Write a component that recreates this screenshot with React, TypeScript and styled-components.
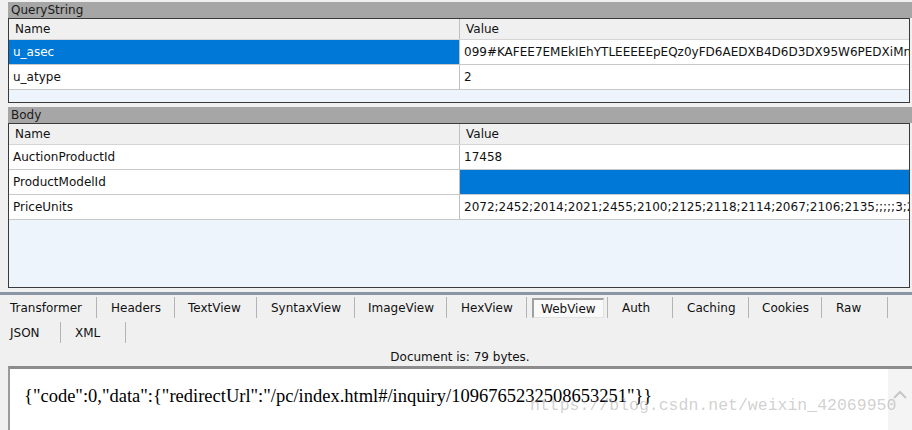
import React from "react";
import styled, { createGlobalStyle } from "styled-components";

const Global = createGlobalStyle`
  html, body { margin: 0; padding: 0; background: #f0f0f0; }
  body { font-family: "DejaVu Sans", Verdana, sans-serif; font-size: 12px; color: #000; }
`;

const Page = styled.div`
  width: 912px;
  height: 430px;
  overflow: hidden;
  padding: 2px 0 0 8px;
  box-sizing: border-box;
  display: flex;
  flex-direction: column;
  background: #f0f0f0;
`;

const Section = styled.section<{ $gap?: number }>`
  display: flex;
  flex-direction: column;
  margin-top: ${(p) => p.$gap ?? 0}px;
`;

const SectionTitle = styled.div`
  height: 16px;
  line-height: 16px;
  background: #a6a6a6;
  padding-left: 3px;
  color: #1a1a1a;
  font-size: 12px;
`;

const Grid = styled.div<{ $height: number }>`
  height: ${(p) => p.$height}px;
  margin-right: 2px;
  border: 1px solid #3a3a3a;
  background: #edf4fc;
  box-sizing: border-box;
  display: flex;
  flex-direction: column;
  overflow: hidden;
`;

const Row = styled.div<{ $head?: boolean }>`
  display: grid;
  grid-template-columns: 451px 1fr;
  height: ${(p) => (p.$head ? 21 : 25)}px;
  background: ${(p) => (p.$head ? "#f0f0f0" : "#ffffff")};
  border-bottom: 1px solid ${(p) => (p.$head ? "#d5d5d5" : "#c8c8c8")};
  box-sizing: border-box;
`;

const Cell = styled.div<{ $selected?: boolean; $head?: boolean; $first?: boolean }>`
  display: flex;
  align-items: center;
  padding-left: ${(p) => (p.$head ? 6 : 4)}px;
  white-space: nowrap;
  overflow: hidden;
  background: ${(p) => (p.$selected ? "#0078d7" : "transparent")};
  color: ${(p) => (p.$selected ? "#ffffff" : "#111")};
  border-right: ${(p) => (p.$first ? "1px solid #c0c0c0" : "none")};
  font-size: 12px;
`;

const Splitter = styled.div`
  height: 3px;
  margin-top: 4px;
  background: #8a96a3;
  margin-left: -8px;
`;

const TabRow = styled.div`
  display: flex;
  height: 25px;
  align-items: center;
`;

const Tab = styled.div<{ $w: number; $pl: number; $sep?: boolean }>`
  width: ${(p) => p.$w}px;
  height: 21px;
  box-sizing: border-box;
  display: flex;
  align-items: center;
  padding-left: ${(p) => p.$pl}px;
  border-right: ${(p) => (p.$sep ? "1px solid #b4b4b4" : "none")};
  font-size: 12px;
  color: #111;
  white-space: nowrap;
`;

const ActiveBox = styled.div`
  height: 20px;
  margin-left: -9px;
  padding: 2px 7px 0 7px;
  box-sizing: border-box;
  display: flex;
  align-items: center;
  background: #f9f9f9;
  border-top: 2px solid #a0a0a0;
  border-left: 2px solid #a0a0a0;
  border-right: 1px solid #e3e3e3;
  border-bottom: 1px solid #e3e3e3;
`;

const Status = styled.div`
  height: 21px;
  display: flex;
  align-items: center;
  justify-content: center;
  font-size: 12px;
  color: #111;
  padding-top: 3px;
  box-sizing: border-box;
`;

const Viewer = styled.div`
  flex: 1;
  border-top: 3px solid #8c8c8c;
  border-left: 2px solid #9a9a9a;
  background: #ffffff;
  display: flex;
  position: relative;
`;

const Content = styled.div`
  flex: 1;
  padding: 17px 0 0 14px;
  font-family: "Liberation Serif", "Times New Roman", serif;
  font-size: 18.5px;
  color: #000;
  white-space: nowrap;
`;

const ScrollTrack = styled.div`
  width: 24px;
  background: #f4f4f4;
  display: flex;
  justify-content: center;
  padding-top: 21px;
  box-sizing: border-box;
`;

const Watermark = styled.div`
  position: absolute;
  left: 520px;
  top: 27px;
  font-family: "Liberation Mono", "DejaVu Sans Mono", monospace;
  font-size: 16.5px;
  color: rgba(150, 150, 150, 0.45);
  pointer-events: none;
  white-space: nowrap;
`;

const tabs1 = [
  { label: "Transformer", w: 89, pl: 2 },
  { label: "Headers", w: 78, pl: 14 },
  { label: "TextView", w: 82, pl: 13 },
  { label: "SyntaxView", w: 98, pl: 14 },
  { label: "ImageView", w: 92, pl: 13 },
  { label: "HexView", w: 80, pl: 14 },
  { label: "WebView", w: 81, pl: 14, active: true },
  { label: "Auth", w: 65, pl: 14 },
  { label: "Caching", w: 76, pl: 14 },
  { label: "Cookies", w: 73, pl: 13 },
  { label: "Raw", w: 66, pl: 14 },
];

const tabs2 = [
  { label: "JSON", w: 53, pl: 2 },
  { label: "XML", w: 65, pl: 14 },
];

const query = [
  { name: "u_asec", value: "099#KAFEE7EMEkIEhYTLEEEEEpEQz0yFD6AEDXB4D6D3DX95W6PEDXiMn6EDXiMn6", selName: true },
  { name: "u_atype", value: "2" },
];

const body = [
  { name: "AuctionProductId", value: "17458" },
  { name: "ProductModelId", value: "", selValue: true },
  {
    name: "PriceUnits",
    value: "2072;2452;2014;2021;2455;2100;2125;2118;2114;2067;2106;2135;;;;;3;2;4;5;6;7;8",
  },
];

type Item = { name: string; value: string; selName?: boolean; selValue?: boolean };

const ParamTable: React.FC<{ title: string; rows: Item[]; height: number; gap?: number }> = ({
  title,
  rows,
  height,
  gap,
}) => (
  <Section $gap={gap}>
    <SectionTitle>{title}</SectionTitle>
    <Grid $height={height}>
      <Row $head>
        <Cell $head $first>Name</Cell>
        <Cell $head>Value</Cell>
      </Row>
      {rows.map((r) => (
        <Row key={r.name}>
          <Cell $first $selected={r.selName}>{r.name}</Cell>
          <Cell $selected={r.selValue}>{r.value}</Cell>
        </Row>
      ))}
    </Grid>
  </Section>
);

const Chevron = () => (
  <svg width="14" height="9" viewBox="0 0 14 9">
    <path d="M1 8 L7 2 L13 8" fill="none" stroke="#c6c6c6" strokeWidth="2" />
  </svg>
);

export default function App() {
  return (
    <>
      <Global />
      <Page>
        <ParamTable title="QueryString" rows={query} height={85} />
        <ParamTable title="Body" rows={body} height={165} gap={4} />
        <Splitter />
        <TabRow>
          {tabs1.map((t) => (
            <Tab key={t.label} $w={t.w} $pl={t.pl} $sep>
              {t.active ? <ActiveBox>{t.label}</ActiveBox> : t.label}
            </Tab>
          ))}
        </TabRow>
        <TabRow>
          {tabs2.map((t) => (
            <Tab key={t.label} $w={t.w} $pl={t.pl} $sep>
              {t.label}
            </Tab>
          ))}
        </TabRow>
        <Status>Document is: 79 bytes.</Status>
        <Viewer>
          <Content>{'{"code":0,"data":{"redirectUrl":"/pc/index.html#/inquiry/1096765232508653251"}}'}</Content>
          <ScrollTrack>
            <Chevron />
          </ScrollTrack>
          <Watermark>https://blog.csdn.net/weixin_42069950</Watermark>
        </Viewer>
      </Page>
    </>
  );
}
